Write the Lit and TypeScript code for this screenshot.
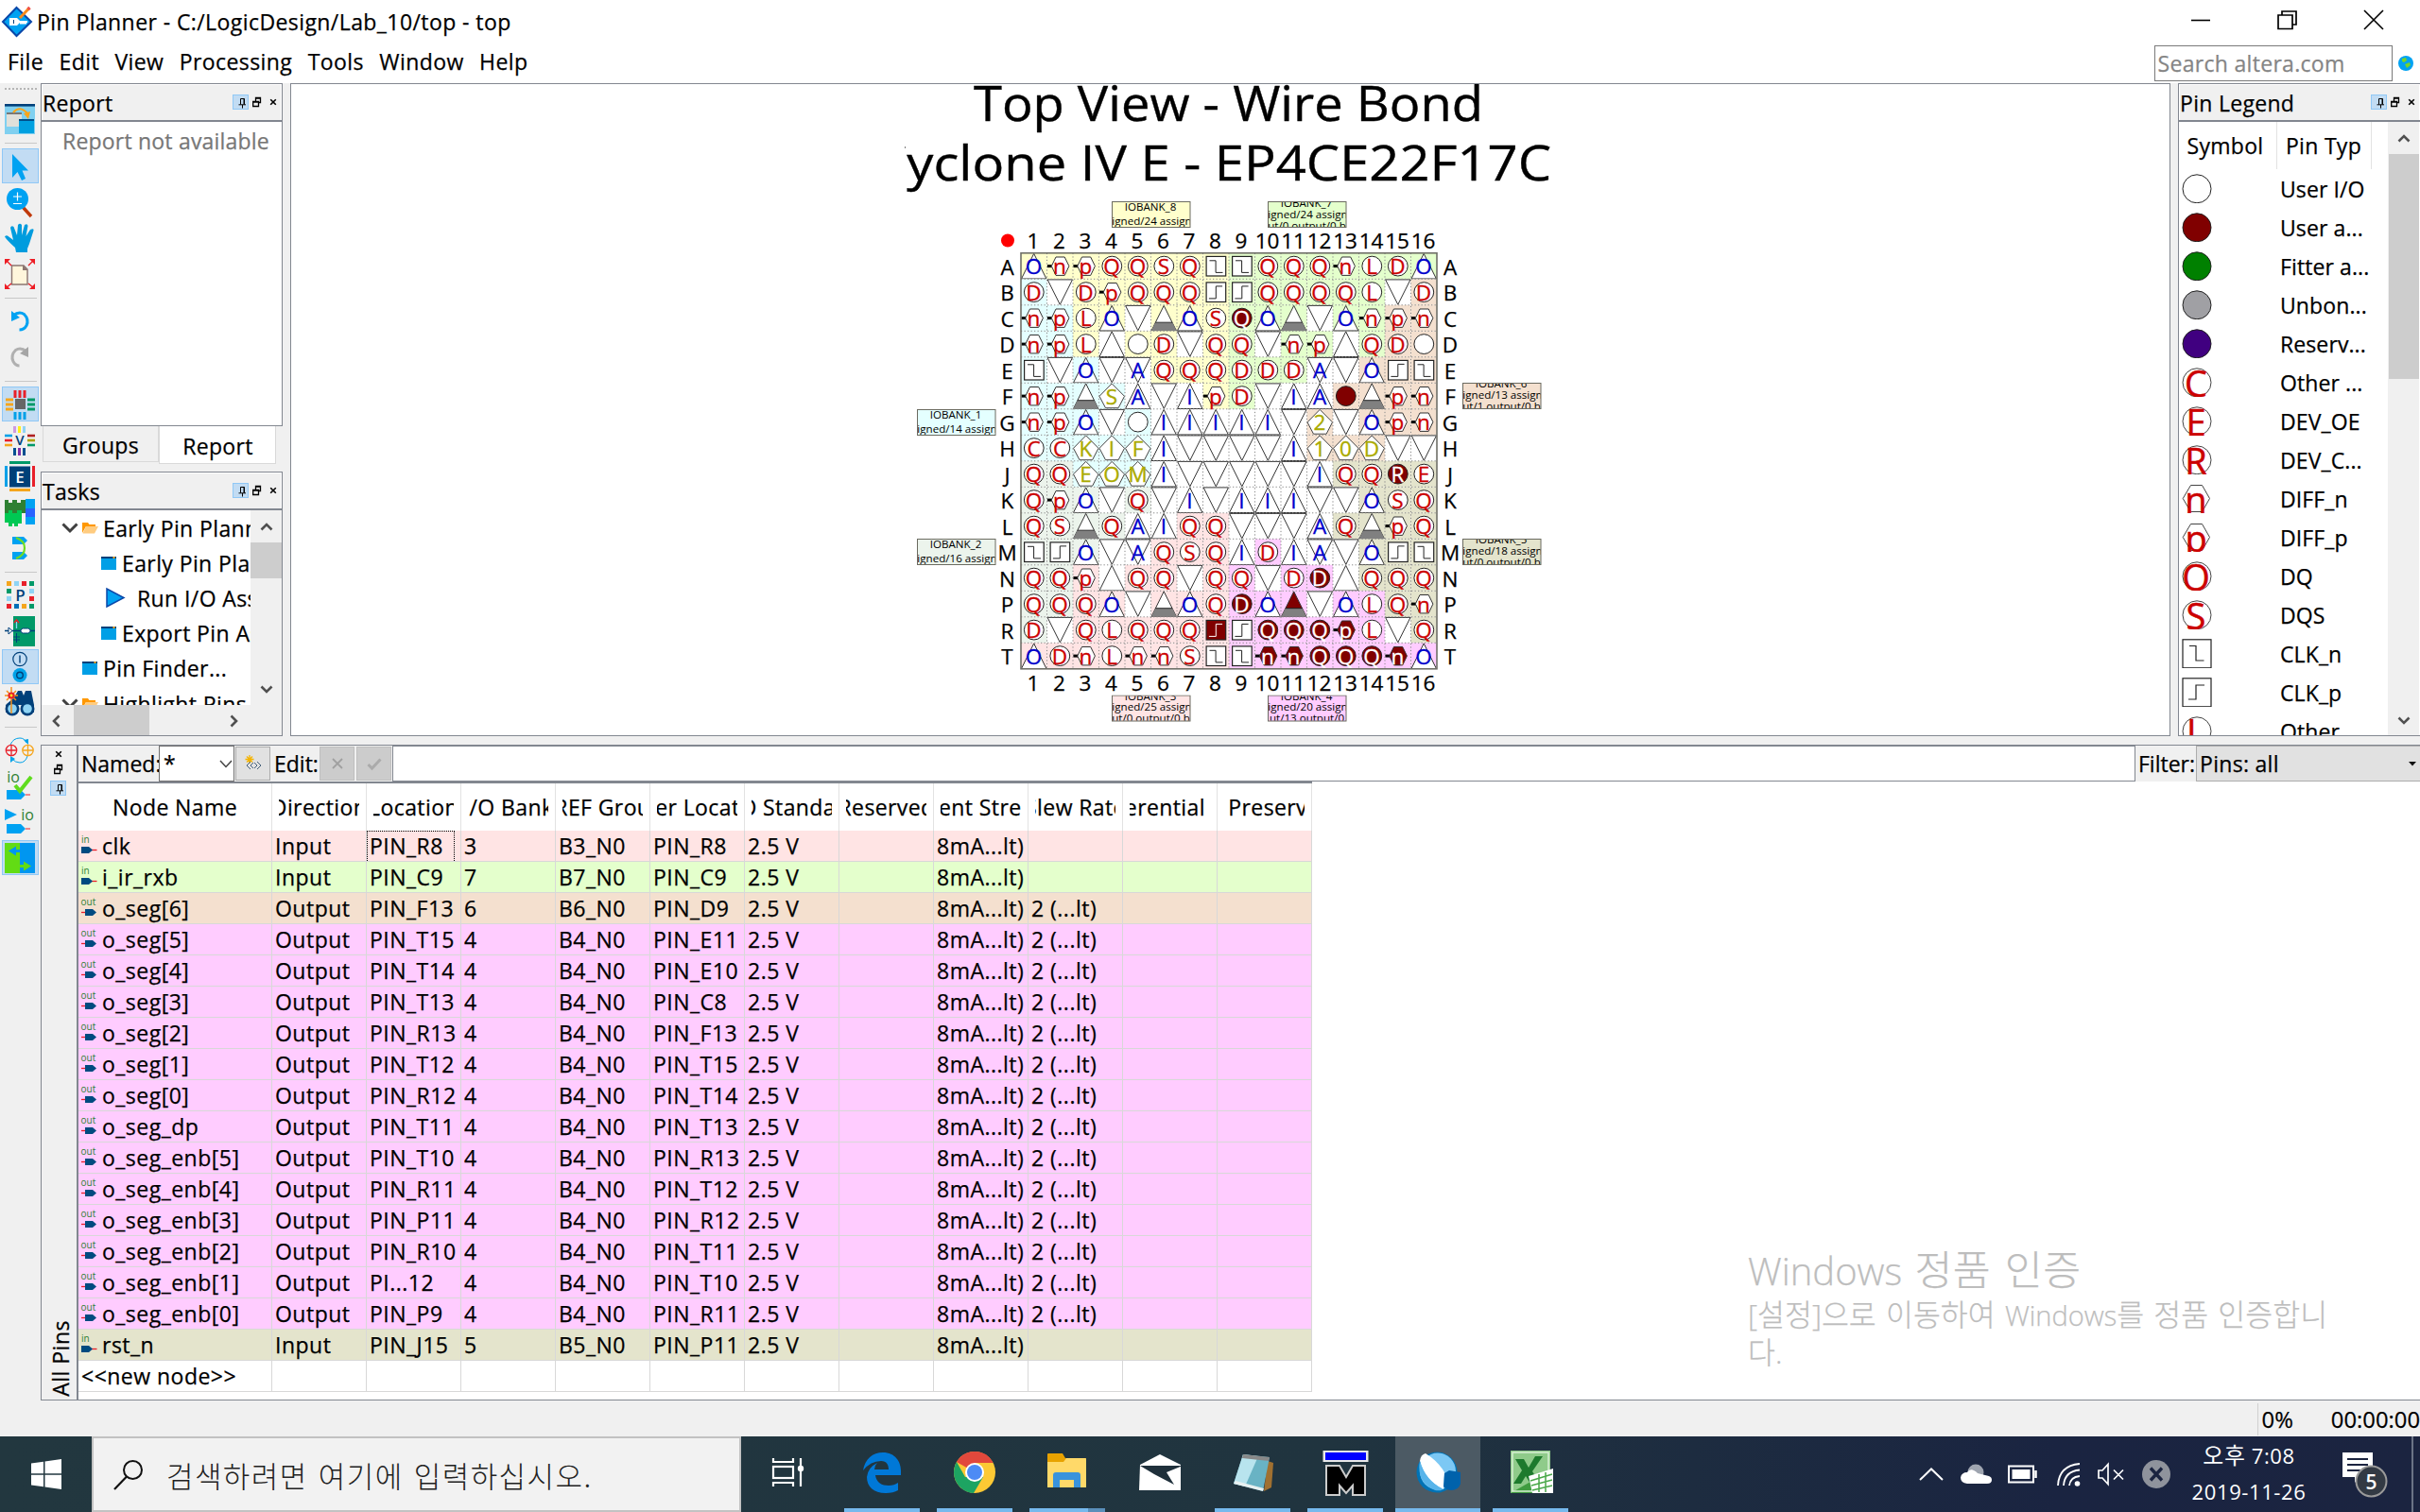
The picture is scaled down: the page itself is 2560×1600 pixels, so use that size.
import { LitElement, html, svg, css, nothing } from "lit";
import { customElement, property } from "lit/decorators.js";

/* ---------- palette ---------- */
const BANK: Record<string, string> = {
  "1": "#e4ffff", "2": "#ecf4ec", "3": "#ffe4e4", "4": "#ffccff",
  "5": "#e4e4cc", "6": "#f4e0cf", "7": "#e4ffcc", "8": "#ffffcc", w: "#ffffff",
};

/* ---------- package grid ----------
   Each token is <shape><letter?><!?><bank>.
   c circle, h hexagon, u up triangle, d down triangle, g power/ground,
   x clock-n, y clock-p, p pentagon; ! marks an assigned pin. */
const ROWS: [string, string][] = [
  ["A", "uO8 hn8 hp8 cQ8 cQ8 cS8 cQ8 x8 x7 cQ7 cQ7 cQ7 hn7 cL7 cD7 uO7"],
  ["B", "cD1 dw cD8 hp8 cQ8 cQ8 cQ8 y8 y7 cQ7 cQ7 cQ7 cQ7 cL7 dw cD6"],
  ["C", "hn1 hp1 cL8 uO8 dw g8 uO8 cS8 cQ!7 uO7 g7 dw uO7 hn7 hp6 hn6"],
  ["D", "hn1 hp1 cL8 uw c8 cD8 dw cQ8 cQ7 dw hn7 hp7 uw cQ7 cD6 c6"],
  ["E", "x1 dw uO1 dw dAw cQ8 cQ8 cQ8 cD7 cD7 cD7 dAw dw uO6 y6 x6"],
  ["F", "hn1 hp1 g1 pS1 uAw dw uIw hp8 cD7 dw uIw uAw c!6 g6 hp6 hn6"],
  ["G", "hn1 hp1 uO1 dw c1 uIw uIw uIw uIw uIw dw p26 dw uO6 hp6 hn6"],
  ["H", "cC1 cC1 pK1 pI1 pF1 uIw dw dw dw dw uIw p16 p06 pD6 dw dw"],
  ["J", "cQ2 cQ2 pE1 pO1 pM1 uIw dw dw dw dw dw uIw cQ5 cQ5 cR!5 cE5"],
  ["K", "cQ2 hp2 uO2 dw cQ2 dw uIw dw uIw uIw uIw dw dw uO5 cS5 cQ5"],
  ["L", "cQ2 cS2 g2 cQ2 uAw uIw cQ3 cQ3 dw dw dw uAw cQ5 g5 hp5 cQ5"],
  ["M", "x2 y2 uO2 dw dAw cQ3 cS3 cQ3 uIw cD4 uIw dAw dw uO5 y5 x5"],
  ["N", "cQ2 cQ2 hp3 uw cQ3 cQ3 dw cQ3 cQ4 dw cD4 cD!4 uw cQ5 cQ5 cQ5"],
  ["P", "cQ2 cQ2 cQ3 uO3 dw g3 uO3 cQ3 cD!4 uO4 g!4 dw uO4 cL4 cQ5 hn5"],
  ["R", "cD2 dw cQ3 cL3 cQ3 cQ3 cQ3 y!3 y4 cQ!4 cQ!4 cQ!4 hp!4 cL4 dw cQ5"],
  ["T", "uO3 cD3 hn3 cL3 hn3 hn3 cS3 x3 x4 hn!4 hn!4 cQ!4 cQ!4 cQ!4 hn!4 uO4"],
];

const X0 = 1080, Y0 = 267.8, P = 27.5;

const BANKS: [string, number, number, string, string, string, number][] = [
  ["8", 1176, 213, "IOBANK_8", "igned/24 assign", "", 8],
  ["7", 1341, 213, "IOBANK_7", "igned/24 assign", "ut/0 output/0 b", 4],
  ["6", 1547, 405, "IOBANK_6", "igned/13 assign", "ut/1 output/0 b", 3],
  ["1", 970, 433, "IOBANK_1", "igned/14 assign", "", 8],
  ["2", 970, 570, "IOBANK_2", "igned/16 assign", "", 8],
  ["5", 1547, 570, "IOBANK_5", "igned/18 assign", "ut/0 output/0 b", 3],
  ["3", 1176, 735.5, "IOBANK_3", "igned/25 assign", "ut/0 output/0 b", 3],
  ["4", 1341, 735.5, "IOBANK_4", "igned/20 assign", "ut/13 output/0", 3],
];

function pin(token: string, r: number, c: number) {
  const shape = token[0];
  const on = token.includes("!");
  const bank = token[token.length - 1];
  const body = token.slice(1, -1).replace("!", "");
  const fill = on ? "#800000" : "#fff";
  let mark: unknown = nothing;
  let color = on ? "#fff" : "#cc0000";
  const m = 13.8;
  switch (shape) {
    case "c": mark = svg`<circle cx=${m} cy=${m} r="10.4" fill=${fill} stroke="#222"/>`; break;
    case "h": mark = svg`<rect x="0.4" y="12.3" width="5" height="3" fill="#000"/><path d="M4.8 13.8L9.5 4.2H18.7L23.4 13.8L18.7 23.6H9.5Z" fill=${fill} stroke="#333"/>`; break;
    case "u": mark = svg`<path d="M13.7 .6L26.9 27.2H.5Z" fill=${fill} stroke="#333"/>`; color = "#0000cc"; break;
    case "d": mark = svg`<path d="M.6 .6H27L13.8 27Z" fill=${fill} stroke="#333"/>`; color = "#0000cc"; break;
    case "g": mark = svg`<path d="M13.7 .6L26.9 27.2H.5Z" fill=${fill} stroke="#333"/><path d="M4.6 18.6H22.8L26.9 27.2H.5Z" fill="#808080"/><path d="M4.8 18.4H22.6" stroke="#222"/>`; break;
    case "p": mark = svg`<path d="M13.7 .6L27 14L20.6 26.4H7L.5 14Z" fill=${fill} stroke="#444"/>`; color = "#aaaa00"; break;
    case "x": mark = svg`<rect x="3.6" y="3.6" width="20.6" height="20.6" fill=${fill} stroke="#222" stroke-width="1.2"/><path d="M7 8H13.6V20.6H21" fill="none" stroke=${on ? "#fff" : "#222"}/>`; break;
    case "y": mark = svg`<rect x="3.6" y="3.6" width="20.6" height="20.6" fill=${fill} stroke="#222" stroke-width="1.2"/><path d="M6.4 20.6H13.8V7.6H20.6" fill="none" stroke=${on ? "#fff" : "#222"}/>`; break;
  }
  return svg`<g transform="translate(${X0 + c * P} ${Y0 + r * P})">
    ${bank === "w" ? nothing : svg`<rect width=${P} height=${P} fill=${BANK[bank]}/>`}
    ${mark}
    ${body ? svg`<text x="13.5" y="22.4" text-anchor="middle" class="pl" fill=${color} stroke=${color}>${body}</text>` : nothing}
  </g>`;
}

@customElement("package-view")
class PackageView extends LitElement {
  static styles = css`
    :host { display: block; width: 100%; height: 100%; overflow: hidden; }
    svg { display: block; font-family: "Open Sans", "Noto Sans", sans-serif; letter-spacing: 0; }
    .pl { font-size: 22.5px; stroke-width: .35px; }
    .lab { font-size: 22.5px; stroke: #000; stroke-width: .25px; }
    .big { font-size: 52px; stroke: #000; stroke-width: .4px; }
    .tiny { font-size: 11.6px; }
  `;
  render() {
    const lines = Array.from({ length: 15 }, (_, i) => i + 1);
    return html`<svg width="1988" height="689" viewBox="308 89 1988 689">
      <defs><clipPath id="tc"><rect x="957" y="89" width="690" height="120"/></clipPath></defs>
      <g clip-path="url(#tc)">
        <text class="big" x="1030" y="128.400" textLength="539" lengthAdjust="spacingAndGlyphs">Top View - Wire Bond</text>
        <text class="big" x="924" y="190.800" textLength="717" lengthAdjust="spacingAndGlyphs">Cyclone IV E - EP4CE22F17C</text>
      </g>
      <circle cx="1066" cy="254.5" r="7" fill="#f00"/>
      <rect x=${X0} y=${Y0} width="440" height="440" fill="#fff"/>
      ${ROWS.map(([, t], r) => t.split(" ").map((k, c) => pin(k, r, c)))}
      ${lines.map((i) => svg`<path d="M${X0 + i * P} ${Y0}V${Y0 + 440}M${X0} ${Y0 + i * P}H${X0 + 440}" stroke="#8a8a8a" stroke-width="1" stroke-dasharray="1.3 2.2" fill="none"/>`)}
      <rect x=${X0} y=${Y0} width="440" height="440" fill="none" stroke="#707068" stroke-width="1.6"/>
      ${ROWS.map(([l], r) => svg`<text class="lab" text-anchor="middle" x="1065.5" y=${Y0 + r * P + 23}>${l}</text><text class="lab" text-anchor="middle" x="1534" y=${Y0 + r * P + 23}>${l}</text>`)}
      ${ROWS.map((_, c) => svg`<text class="lab" text-anchor="middle" x=${X0 + c * P + 13} y="262.8">${c + 1}</text><text class="lab" text-anchor="middle" x=${X0 + c * P + 13} y="730.8">${c + 1}</text>`)}
      ${BANKS.map(([b, x, y, l1, l2, l3, off]) => svg`<svg x=${x} y=${y} width="84" height="28.5" viewBox="0 0 84 28.5">
        <rect x=".5" y=".5" width="82.5" height="27" fill=${BANK[b]} stroke="#6b6b60"/>
        <svg x="1" y="1" width="81.5" height="26" viewBox="1 1 81.5 26">
          <text class="tiny" text-anchor="middle" x="41" y=${off + 2.3}>${l1}</text>
          <text class="tiny" text-anchor="middle" x="42.500" y=${l3 ? off + 13.6 : off + 16.8}>${l2}</text>
          <text class="tiny" text-anchor="middle" x="41.500" y=${off + 25.5}>${l3}</text>
        </svg></svg>`)}
    </svg>`;
  }
}

/* ---------- toolbar icons (32 x 32) ---------- */
const I: Record<string, unknown> = {
  windows: svg`<rect y="0" width="32" height="32" fill="#80d0f0"/><rect width="32" height="2.6" fill="#00407a"/><rect x="2" y="10" width="16" height="14" fill="#e0e0da"/><rect x="2" y="9" width="16" height="2" fill="#777"/><rect x="15" y="17" width="16" height="14" fill="#00a0e0"/><rect x="15" y="16" width="16" height="2" fill="#00508a"/><path d="M9 9Q16 1 24 10" fill="none" stroke="#f9a51a" stroke-width="2.2"/><path d="M20 10L27 8L25 16Z" fill="#f9a51a"/>`,
  cursor: svg`<path d="M8 3V28L13.5 22L18 31L22 29L18.5 20.5H25Z" fill="#00a2f2"/>`,
  zoom: svg`<path d="M19 21L28 31" stroke="#c0390b" stroke-width="3.4"/><circle cx="13.5" cy="12.5" r="11.5" fill="#00a2f2"/><path d="M9 10H18M13.500 5.500V14.500M9 17.500H18" stroke="#fff" stroke-width="1.2" fill="none"/>`,
  hand: svg`<path d="M12 31L11 26Q2 18 0 14.500Q2 12 5 15L9 18L6 5Q7 2 9.500 4L13 13L14 2Q16 -.5 18 2V13L21 2Q24 0 24.500 3L22.500 14L27 7Q31 5 30.500 8L26 22L24 27V31Z" fill="#009cde"/>`,
  fit: svg`<path d="M7.500 7H20L24 11V27H7.500Z" fill="#fff6dc" stroke="#8b7570" stroke-width="1.4"/><path d="M19 6.500L24.500 12H19Z" fill="#8b7570"/><path d="M1 1L7 7M31 1L25 7M1 31L7 26M31 31L25 26" stroke="#ed1c24" stroke-width="1.4"/><path d="M0 0H6L0 6ZM32 0H26L32 6ZM0 32H6L0 26ZM32 32H26L32 26Z" fill="#ed1c24"/>`,
  undo: svg`<path d="M9 10Q15 5 20.500 8.500Q26 14 23 20.500Q20.500 25 15.500 25" fill="none" stroke="#00a2f2" stroke-width="3"/><path d="M7 5V16L16 12Z" fill="#00a2f2"/>`,
  redo: svg`<path d="M23 10Q17 5 11.500 8.500Q6 14 9 20.500Q11.500 25 15.500 25" fill="none" stroke="#b0b0b0" stroke-width="3"/><path d="M25 5V16L16 12Z" fill="#a5a5a5"/>`,
  chip: svg`<rect x="11" y="10" width="11" height="11" fill="#666"/><path d="M11 1V9M16 1V9M21 1V9" stroke="#e8202a" stroke-width="3"/><path d="M11 24V32M16 24V32M21 24V32" stroke="#00a0e8" stroke-width="3"/><path d="M1 11H9M1 16H9M1 21H9" stroke="#f5a51d" stroke-width="3"/><path d="M24 11H32M24 16H32M24 21H32" stroke="#009968" stroke-width="3"/>`,
  vee: svg`<path d="M10.500 1V8" stroke="#cf9be0" stroke-width="3"/><path d="M15.500 1V8" stroke="#fff11a" stroke-width="3"/><path d="M20.500 1V8" stroke="#8fd4f5" stroke-width="3"/><path d="M10.500 24V32M20.500 24V32" stroke="#005090" stroke-width="3"/><path d="M15.500 24V32" stroke="#8030a8" stroke-width="3"/><path d="M0 11H8" stroke="#00a0e8" stroke-width="2.600"/><path d="M0 16H8" stroke="#e8202a" stroke-width="2.600"/><path d="M0 21H8" stroke="#f5a51d" stroke-width="2.600"/><path d="M24 11H32" stroke="#b02020" stroke-width="2.600"/><path d="M24 16H32" stroke="#b0a000" stroke-width="2.600"/><path d="M24 21H32" stroke="#009968" stroke-width="2.600"/><text x="16" y="21" class="g" font-size="15" fill="#00407a">V</text>`,
  ee: svg`<rect x="5" y="5.500" width="22" height="22" fill="#004078"/><path d="M5 1.500H27" stroke="#009968" stroke-width="3"/><path d="M5 30.500H27" stroke="#f5a51d" stroke-width="3"/><path d="M1.500 5V27" stroke="#00a0e8" stroke-width="3"/><path d="M30.500 5V27" stroke="#e8202a" stroke-width="3"/><text x="16" y="22.500" class="g" font-size="17" fill="#fff">E</text>`,
  puzzle: svg`<path d="M0 3H4V6H8V3H13V6H17V3H22V17H0Z" fill="#2e8033"/><path d="M0 17H4V14H8V17H13V14H18V21H18V28H14V31H10V28H8V31H4V27H0Z" fill="#00c853"/><rect x="22" y="2" width="10" height="10" fill="#00a2f2"/><rect x="22" y="12" width="10" height="9" fill="#2962ff"/><rect x="22" y="21" width="10" height="8" fill="#00a2f2"/>`,
  link: svg`<path d="M8 4H20L24 8L20 12H8ZM8 20H20L24 24L20 28H8Z" fill="#00a2f2"/><path d="M12 5Q21 8 21 16Q21 24 12 27" stroke="#70dc20" stroke-width="2.200" fill="none"/>`,
  pee: svg`<g fill="#f5a51d"><rect x="2" y="1" width="5" height="5"/><rect x="18" y="25" width="5" height="5"/></g><g fill="#e8202a"><rect x="18" y="1" width="5" height="5"/><rect x="26" y="17" width="5" height="5"/><rect x="2" y="25" width="5" height="5"/></g><g fill="#8fd4f5"><rect x="10" y="1" width="5" height="5"/><rect x="26" y="9" width="5" height="5"/><rect x="2" y="17" width="5" height="5"/></g><g fill="#009968"><rect x="26" y="1" width="5" height="5"/><rect x="2" y="9" width="5" height="5"/><rect x="26" y="25" width="5" height="5"/></g><rect x="10" y="25" width="5" height="5" fill="#0070b8"/><text x="16.500" y="21.500" class="g" font-size="17" fill="#00407a">P</text>`,
  board: svg`<rect x="9" y="0" width="23" height="32" fill="#009968"/><path d="M0 15.500H4M8 15.500H17M26 15.500H32" stroke="#00407a" stroke-width="1.300"/><path d="M4 12V19L8 15.500Z" fill="#fff" stroke="#00407a"/><rect x="17" y="13" width="10" height="5" rx="2.500" fill="#fff" stroke="#00407a"/><path d="M12.500 6V13" stroke="#8fd4f5" stroke-width="1.300"/><path d="M10 7L12.500 4L15 7" stroke="#e8202a" fill="none" stroke-width="1.500"/><path d="M12.500 18V28M9 22H16M9 25H16" stroke="#00407a"/>`,
  ioo: svg`<circle cx="16" cy="7.500" r="7.200" fill="none" stroke="#00407a" stroke-width="1.200"/><path d="M16 3.500V11.500" stroke="#00407a" stroke-width="1.400"/><circle cx="16" cy="24.500" r="7.500" fill="#00a2e8"/><circle cx="16" cy="24.500" r="3.300" fill="none" stroke="#00407a" stroke-width="1.400"/>`,
  bino: svg`<path d="M10 10L14 3H18L20 8L22 3H28L31 18V26H18V18H14V26H1V18Z" fill="#00407a"/><circle cx="8" cy="22" r="7.500" fill="#00407a"/><circle cx="24" cy="22" r="7.500" fill="#00407a"/><circle cx="8" cy="22" r="4.800" fill="#8fd4f5"/><circle cx="24" cy="22" r="4.800" fill="#8fd4f5"/><path d="M7 -1V27M0 8H14M2 3L12 13M2 13L12 3" stroke="#f5901d" stroke-width="1.500"/><circle cx="7" cy="8" r="3.600" fill="#e8202a"/><circle cx="7" cy="8" r="1.400" fill="#fff11a"/>`,
  swap: svg`<path d="M6 10Q9 3 16 3Q21 3 23 8" fill="none" stroke="#00a2e8"/><path d="M24 22Q22 29 16 29Q11 29 8 25" fill="none" stroke="#00a2e8"/><path d="M20 5L25 4V10ZM6 22V29L11 25Z" fill="#00a2e8"/><circle cx="7" cy="16" r="5.700" fill="none" stroke="#e8202a" stroke-width="1.300"/><path d="M7 10V22M1 16H13" stroke="#e8202a" stroke-width="1.300"/><circle cx="24.500" cy="16" r="5.700" fill="none" stroke="#f5a51d" stroke-width="1.300"/><path d="M24.500 10V22M19 16H30" stroke="#f5a51d" stroke-width="1.300"/>`,
  iocheck: svg`<text x="9" y="12" class="r" font-size="16" fill="#2e8033">io</text><path d="M2 20H17L22 25L17 30H2Z" fill="#00a2f2"/><path d="M22 25H27" stroke="#e8202a"/><path d="M11 15L16 21L28 6" fill="none" stroke="#5fdc1e" stroke-width="4"/>`,
  ioplay: svg`<path d="M0 2V14L13 8Z" fill="#00a2f2"/><text x="24" y="14" class="r" font-size="16" fill="#2e8033">io</text><path d="M2 18H17L22 23L17 28H2Z" fill="#00a2f2"/><path d="M22 23H27" stroke="#e8202a"/>`,
  exchange: svg`<rect width="16" height="32" fill="#62dc14"/><rect x="16" width="16" height="32" fill="#0096f0"/><path d="M4 8.500L12 3.500V7H20V10H12V13.500Z" fill="#0096f0"/><path d="M28 24.500L20 19.500V23H12V26H20V29.500Z" fill="#62dc14"/>`,
};
const TOOLS = ["windows", "-", "cursor*", "zoom", "hand", "fit", "-", "undo", "redo", "-", "chip*", "vee", "ee", "puzzle", "link", "-", "pee", "board", "ioo*", "bino", "-", "swap", "iocheck", "ioplay", "exchange*"];

/* ---------- dock caption ---------- */
const pinBtn = html`<span class="pb on"><svg width="16" height="15" viewBox="0 0 16 15"><path d="M7.500 3.500H11.500V9.500M7.500 3.500V9.500M5.500 9.800H13M9.500 10V13.500" fill="none" stroke="#000"/><path d="M11 3.500V9.500" stroke="#000"/></svg></span>`;
const floatBtn = html`<span class="pb"><svg width="10" height="12" viewBox="0 0 10 12"><path d="M3.500 5V1.500H8.500V6.500H6.500M3 2H9" fill="none" stroke="#000" stroke-width="1.300"/><path d="M.700 5.500H6.500V10.500H.700ZM.700 6.200H6.500" fill="none" stroke="#000" stroke-width="1.300"/></svg></span>`;
const closeBtn = html`<span class="pb"><svg width="8" height="8" viewBox="0 0 8 8"><path d="M1.200 1.200L6.800 6.800M6.800 1.200L1.200 6.800" stroke="#000" stroke-width="1.600"/></svg></span>`;

/* ---------- table ---------- */
const HEAD = ["Node Name", "Direction", "Location", "I/O Bank", "VREF Group", "Fitter Location", "I/O Standard", "Reserved", "Current Strength", "Slew Rate", "Differential Pair", "Strict Preservation"];
const NODES: [string, string, string, string, string, string][] = [
  ["clk", "Input", "PIN_R8", "3", "B3_N0", "PIN_R8"],
  ["i_ir_rxb", "Input", "PIN_C9", "7", "B7_N0", "PIN_C9"],
  ["o_seg[6]", "Output", "PIN_F13", "6", "B6_N0", "PIN_D9"],
  ["o_seg[5]", "Output", "PIN_T15", "4", "B4_N0", "PIN_E11"],
  ["o_seg[4]", "Output", "PIN_T14", "4", "B4_N0", "PIN_E10"],
  ["o_seg[3]", "Output", "PIN_T13", "4", "B4_N0", "PIN_C8"],
  ["o_seg[2]", "Output", "PIN_R13", "4", "B4_N0", "PIN_F13"],
  ["o_seg[1]", "Output", "PIN_T12", "4", "B4_N0", "PIN_T15"],
  ["o_seg[0]", "Output", "PIN_R12", "4", "B4_N0", "PIN_T14"],
  ["o_seg_dp", "Output", "PIN_T11", "4", "B4_N0", "PIN_T13"],
  ["o_seg_enb[5]", "Output", "PIN_T10", "4", "B4_N0", "PIN_R13"],
  ["o_seg_enb[4]", "Output", "PIN_R11", "4", "B4_N0", "PIN_T12"],
  ["o_seg_enb[3]", "Output", "PIN_P11", "4", "B4_N0", "PIN_R12"],
  ["o_seg_enb[2]", "Output", "PIN_R10", "4", "B4_N0", "PIN_T11"],
  ["o_seg_enb[1]", "Output", "PI...12", "4", "B4_N0", "PIN_T10"],
  ["o_seg_enb[0]", "Output", "PIN_P9", "4", "B4_N0", "PIN_R11"],
  ["rst_n", "Input", "PIN_J15", "5", "B5_N0", "PIN_P11"],
];
const dirIcon = (out: boolean) => out
  ? html`<svg class="dir" width="17" height="20" viewBox="0 0 17 20"><text x="-.500" y="7.500" font-size="10" fill="#2e8033">out</text><path d="M0 15.500H5" stroke="#e8202a" stroke-width="1.300"/><path d="M4 12H12L16 15.500L12 19H4Z" fill="#004a80"/></svg>`
  : html`<svg class="dir" width="17" height="20" viewBox="0 0 17 20"><text x="0" y="7.500" font-size="10" fill="#2e8033">in</text><path d="M11 15.500H16.500" stroke="#e8202a" stroke-width="1.300"/><path d="M0 12H8L12 15.500L8 19H0Z" fill="#004a80"/></svg>`;

/* ---------- legend ---------- */
const LEGEND: [string, string, string][] = [
  ["c", "#fff", "User I/O"], ["c", "#800000", "User a..."], ["c", "#008000", "Fitter a..."], ["c", "#a0a0a4", "Unbon..."], ["c", "#400080", "Reserv..."],
  ["C", "", "Other ..."], ["E", "", "DEV_OE"], ["R", "", "DEV_C..."], ["n", "h", "DIFF_n"], ["p", "h", "DIFF_p"], ["Q", "", "DQ"], ["S", "", "DQS"],
  ["x", "", "CLK_n"], ["y", "", "CLK_p"], ["L", "", "Other"],
];
function legendSymbol([k, v]: [string, string, string]) {
  let g;
  if (k === "c") g = svg`<circle cx="16" cy="15.800" r="15" fill=${v} stroke="#222"/>`;
  else if (k === "x" || k === "y") g = svg`<rect x="1" y=".8" width="30" height="30" fill="#fff" stroke="#222" stroke-width="1.200"/><path d=${k === "x" ? "M8 7.500H15V23H23.500" : "M7 23H15V8H24"} fill="none" stroke="#222" stroke-width="1.200"/>`;
  else if (v === "h") g = svg`<path d="M1.200 15.500L9.500 1.500H21.500L29.500 15.500L21.500 29.500H9.500Z" fill="#fff" stroke="#444"/><text x="15" y="30.600" class="sym">${k}</text>`;
  else g = svg`<circle cx="16" cy="15.800" r="15" fill="#fff" stroke="#444"/><text x="15" y="30.600" class="sym">${k}</text>`;
  return html`<svg class="lsym" width="32" height="31.5" viewBox="0 0 32 31.5">${g}</svg>`;
}

/* ---------- tasks ---------- */
const chev = html`<svg width="18" height="12" viewBox="0 0 18 12"><path d="M1.500 1.500L9 9L16.500 1.500" fill="none" stroke="#404040" stroke-width="3"/></svg>`;
const folder = html`<svg width="17" height="13" viewBox="0 0 17 13"><path d="M0 1H6L7.500 3H14V5H4L0 12Z" fill="#ff9800"/><path d="M4 5H17L13 12.500H.500Z" fill="#ffcc80"/></svg>`;
const sheet = html`<svg width="16" height="14" viewBox="0 0 16 14"><rect width="16" height="14" fill="#009fe6"/><rect width="16" height="2" fill="#00407a"/><rect x="12.500" width="2" height="2" fill="#f9a51a"/></svg>`;
const play = html`<svg width="20" height="21" viewBox="0 0 20 21"><path d="M1 1V20L19 10.500Z" fill="#00a2f2" stroke="#0a47a9" stroke-width="1.500"/></svg>`;
const TASKS: [number, unknown, number, string, number][] = [
  [1, folder, 5, "Early Pin Plannning", 87],
  [0, sheet, 6, "Early Pin Planning", 107],
  [0, play, 13, "Run I/O Assignment", 112],
  [0, sheet, 6, "Export Pin Assignments", 107],
  [0, sheet, 6, "Pin Finder...", 87],
  [1, folder, 5, "Highlight Pins", 87],
];
const arrow = (d: string) => html`<svg width="14" height="14" viewBox="0 0 14 14"><path d=${d} fill="none" stroke="#505050" stroke-width="2.600"/></svg>`;
const UP = "M1.500 9.500L7 4L12.500 9.500", DOWN = "M1.500 4.500L7 10L12.500 4.500", LEFT = "M9.500 1.500L4 7L9.500 12.500", RIGHT = "M4.500 1.500L10 7L4.500 12.500";

/* ---------- task bar ---------- */
const APPS: [string, unknown][] = [
  ["", svg`<g fill="none" stroke="#fff" stroke-width="2.200"><path d="M5 7V11H26V7M5 37V33H26V37"/><rect x="5" y="16" width="21" height="12"/><path d="M34 7V37"/></g><circle cx="34" cy="18" r="3.200" fill="#fff"/>`],
  ["run", svg`<path d="M2 20C4 8 12 1 23 1C36 1 42 11 42 20V25H15C16 33 22 36 29 36Q35 36 39 33V41Q34 44 26 44C13 44 6 37 6 27Q7 17 17 12Q14 15 14 19H29C29 14 27 10 21 10Q10 10 2 20Z" fill="#0078d7"/>`],
  ["run", svg`<circle cx="22" cy="22" r="22" fill="#fcc934"/><path d="M22 22L2.900 11A22 22 0 0 1 41.100 11L41 12H22Z" fill="#e2483c"/><path d="M3 11A22 22 0 0 0 21 44L31 27L12 27Z" fill="#1da462"/><path d="M22 0A22 22 0 0 1 41.500 12H22Z" fill="#e2483c"/><circle cx="22" cy="22" r="10" fill="#fff"/><circle cx="22" cy="22" r="8" fill="#4c8bf5"/>`],
  ["multi", svg`<path d="M1 6V3Q1 2 2 2H17L20 7H41Q42 7 42 8V16H1Z" fill="#e8a200"/><path d="M1 11H18L21 7H41Q42 7 42 8V38H1Z" fill="#ffd969"/><path d="M7 38V25Q7 22 10 22H33Q36 22 36 25V38H29V30H14V38Z" fill="#3a93dc"/>`],
  ["", svg`<path d="M1 14L22 3L44 14V41H0Z" fill="#fff"/><path d="M1 15H46L29 22L37 35L16 24Z" fill="#1f303b"/>`],
  ["run", svg`<path d="M38 10L44 12L42 38L34 42Z" fill="#a07030"/><path d="M12 3L40 6L33 42L2 34Z" fill="#69b3c4"/><path d="M12 3L28 5L14 37L2 34Z" fill="#b8e4ee"/><path d="M12 3L40 6L39 10L11 7Z" fill="#888"/><path d="M2 34L33 42L34 39L4 31Z" fill="#e8f0f0"/>`],
  ["run", svg`<rect x="-1.500" y="-1" width="48" height="12" fill="#e8e8e8"/><rect x="1" y="1" width="43" height="8" fill="#0000ff"/><path d="M2 15H16L23 27L30 15H43V46H30V36L23 44L16 36V46H2Z" fill="#000" stroke="#ccc" stroke-width="2"/>`],
  ["active", svg`<circle cx="21" cy="22" r="21.500" fill="#0072b5"/><ellipse cx="22" cy="21" rx="19" ry="19.500" fill="#7cc8f4"/><path d="M3 10Q4 3 9 2Q22 10 29 22L28 40Q9 31 3 10Z" fill="#fff"/><path d="M3 10Q-1 32 19 41Q24 42 28 40Q9 31 3 10Z" fill="#58b4ea"/><path d="M29 23L34 20L46 22V34Q44 41 36 41Q30 40 28 37Z" fill="#0062ab"/>`],
  ["run", svg`<rect x="1" y="-1" width="42" height="45" fill="#3f9c3f"/><path d="M1 -1H43V20L1 44Z" fill="#8fcb8a"/><rect x="3" y="1" width="38" height="41" fill="none" stroke="#d7efd4" stroke-width="1.500"/><path d="M6 8H15L20 17L27 5H35L24 21L32 34H22L17 26L12 34H4L13 20Z" fill="#1d7a2d"/><path d="M20 26L46 18V44H24Z" fill="#fff"/><path d="M22 31L45 24M23 36L45 30M24 41L45 36M31 24V43M38 22V43" stroke="#4aa84a" stroke-width="1.500"/>`],
];

@customElement("app-root")
export class AppRoot extends LitElement {
  static styles = css`
    :host { display: block; width: 2560px; height: 1600px; overflow: hidden; background: #f0f0f0; color: #000; font-family: "Open Sans", "Noto Sans", "Noto Sans CJK KR", sans-serif; font-size: 23px; letter-spacing: .3px; white-space: nowrap; -webkit-text-stroke: .25px currentColor; }
    * { box-sizing: border-box; }
    svg { display: block; flex: none; overflow: visible; -webkit-text-stroke: 0; }
    .g { font-weight: 600; text-anchor: middle; letter-spacing: 0; }
    .r { text-anchor: middle; letter-spacing: 0; }
    .title { height: 46px; background: #fff; display: flex; align-items: center; padding: 0 0 0 2px; letter-spacing: .42px; }
    .title svg.logo { margin-right: 5px; margin-top: -1px; }
    .caps { margin-left: auto; display: flex; gap: 71px; padding-right: 39px; margin-top: -4px; }
    .menu { height: 42px; background: #fff; display: flex; align-items: center; padding-left: 8px; gap: 16.400px; letter-spacing: .42px; }
    .menu > span { margin-top: -4px; }
    .search { margin-left: auto; width: 252px; height: 38px; border: 1px solid #7a7a7a; color: #858585; display: flex; align-items: center; padding-left: 3px; letter-spacing: .3px; }
    .globe { margin: 0 7px 0 -10px; }
    .bars { display: flex; height: 1394px; }
    .tools { width: 43px; height: 1394px; flex: none; background: #f0f0f0; padding-top: 5px; display: flex; flex-direction: column; align-items: center; }
    .grip { width: 34px; height: 2px; background: repeating-linear-gradient(90deg, #b5b5b5 0 2px, transparent 2px 4px); margin-bottom: 12px; }
    .tool { width: 39px; height: 38px; margin-right: 1px; display: grid; place-items: center; flex: none; border: 1px solid transparent; }
    .tool.on { background: #c2dcf3; border-color: #90c8f6; height: 37px; margin-bottom: 1px; }
    .sep { width: 34px; height: 12px; flex: none; display: flex; align-items: center; }
    .sep::before { content: ""; height: 1px; width: 100%; background: #c8c8c8; }
    .main { flex: 1; min-width: 0; display: flex; flex-direction: column; }
    .upper { display: flex; height: 691px; }
    .left { width: 256px; display: flex; flex-direction: column; }
    .dock { border: 1px solid #828790; background: #f0f0f0; display: flex; flex-direction: column; overflow: hidden; }
    .cap { height: 38px; flex: none; display: flex; align-items: center; padding: 1px 3px 0 0; border: 1px solid #fff; border-bottom: 0; }
    .cap .btns { margin-left: auto; display: flex; align-items: center; gap: 4px; margin-top: -3px; }
    .pb { display: grid; place-items: center; min-width: 10px; }
    .btns .pb + .pb { margin-left: 0; }
    .btns .pb + .pb + .pb { margin-left: 3px; }
    .pb.on { background: #c2dcf3; border: 1px solid #90c8f6; width: 17px; height: 16px; }
    .body { border-top: 2px solid #828790; background: #fff; flex: 1; min-height: 0; overflow: hidden; }
    .report { height: 363px; flex: none; }
    .na { color: #777; padding: 4px 0 0 22px; letter-spacing: .2px; }
    .tabs { height: 48px; display: flex; padding-left: 2px; }
    .tab { width: 123px; height: 38px; border: 1px solid #d9d9d9; border-top: 0; display: grid; place-items: center; padding-top: 2px; }
    .tab.on { width: 124px; height: 40px; background: #fff; padding-left: 1px; }
    .tasks { height: 280px; flex: none; }
    .tgrid { display: grid; grid-template-columns: 221px 33px; grid-template-rows: 206px 33px; height: 100%; background: #f0f0f0; }
    .tree { background: #fff; overflow: hidden; }
    .trow { height: 37.200px; display: flex; align-items: center; letter-spacing: .4px; }
    .trow .tx { width: 0; flex: 1; }
    .sb { display: flex; flex-direction: column; align-items: center; background: #f0f0f0; }
    .thumb { background: #cdcdcd; }
    .canvas { flex: none; width: 1989px; margin: 0 8px; border: 1px solid #828790; background: #fff; overflow: hidden; }
    .legend { width: 257px; flex: none; }
    .lg { display: flex; height: 100%; }
    .ltab { width: 221px; overflow: hidden; }
    .lhead { display: flex; height: 50px; }
    .lhead span { border-right: 1px solid #e2e2e2; display: grid; place-items: center; }
    .lrow { height: 41px; display: flex; align-items: center; padding-left: 3px; letter-spacing: .1px; }
    .lrow span { margin-left: 72px; padding-top: 1px; }
    .lsym { overflow: hidden; }
    .sym { font-size: 38px; fill: #c00; stroke: #c00; stroke-width: .5px; text-anchor: middle; letter-spacing: 0; }
    .lower { margin-top: 9px; height: 694px; display: flex; border: 1px solid #828790; border-right: 0; }
    .side { width: 39px; flex: none; display: flex; flex-direction: column; align-items: center; border-right: 2px solid #828790; padding: 5px 2px 0 0; gap: 6px; }
    .vert { writing-mode: vertical-rl; transform: rotate(180deg); line-height: 34px; padding-top: 1px; margin: auto -4px 2px 0; letter-spacing: .5px; }
    .pane { flex: 1; min-width: 0; background: #fff; display: flex; flex-direction: column; }
    .bar { height: 38px; flex: none; background: #f0f0f0; display: flex; align-items: center; border-bottom: 0; }
    .bar .lbl { padding-left: 3px; letter-spacing: 0; }
    .combo { height: 38px; border: 1px solid #707070; background: #fff; display: flex; align-items: center; justify-content: space-between; padding: 0 1px 0 4px; }
    .bt { width: 37px; height: 36px; border: 1px solid #adadad; background: #e1e1e1; display: grid; place-items: center; }
    .bt.off { background: #ccc; border-color: #bfbfbf; }
    .edit { flex: 1; height: 38px; border: 1px solid #828790; background: #fff; margin-left: 1px; }
    .filter { width: 237px; height: 38px; background: #e1e1e1; border: 1px solid #adadad; border-right: 0; display: flex; align-items: center; padding: 0 4px 0 3px; justify-content: space-between; }
    .grid { border-top: 2px solid #828790; display: grid; grid-template-columns: 205px repeat(11, 100px); width: 1305px; }
    .th { height: 50px; border-right: 1px solid #e2e2e2; padding: 0 7px; display: flex; }
    .th div { flex: 1; overflow: hidden; display: flex; justify-content: center; align-items: center; letter-spacing: .4px; }
    .td { height: 33px; border-right: 1px solid #d8d8d8; border-bottom: 1px solid #d8d8d8; padding: 0 0 0 3px; display: flex; align-items: center; overflow: hidden; letter-spacing: .48px; }
    .td.focus { position: relative; }
    .td.focus::after { content: ""; position: absolute; left: 0; top: 0; width: 91px; height: 32px; border: 1px dotted #000; }
    .dir { margin-right: 5px; margin-top: -3px; letter-spacing: 0; }
    .status { height: 38px; display: flex; align-items: center; justify-content: flex-end; padding: 2px 0 0; letter-spacing: 0; font-size: 23.800px; }
    .status span { border-left: 1px solid #d0d0d0; height: 34px; display: flex; align-items: center; padding-left: 4px; }
    .status span + span { border: 0; padding-left: 40px; }
    .task { height: 80px; display: flex; background: linear-gradient(90deg, #22373f, #20343f 55%, #1a2441 85%, #1b2440); color: #fff; letter-spacing: 0; -webkit-text-stroke: 0; }
    .start { width: 97px; display: grid; place-items: center; }
    .find { width: 687px; background: #f2f2f2; border: 2px solid #c2c2c2; color: #222; display: flex; align-items: center; padding-left: 21px; gap: 25px; font-family: "Noto Sans CJK KR", sans-serif; font-size: 31px; font-weight: 300; letter-spacing: 1.400px; word-spacing: 3px; }
    .find svg { margin-top: 2px; }
    .apps { display: flex; margin-left: 6px; }
    .app { width: 90px; margin-right: 8px; display: flex; flex-direction: column; }
    .app .ic { height: 76px; display: grid; place-items: center; }
    .app i { height: 4px; margin: 0 5px; }
    .app.run i { background: #76b9ed; }
    .app.multi i { background: linear-gradient(90deg, #76b9ed 62px, #5a8fba 62px); }
    .app.active { background: #4c5a64; margin-left: 0; }
    .app.active i { background: #76b9ed; margin: 0; }
    .tray { margin-left: auto; display: flex; align-items: center; }
    .clock { width: 134px; font-size: 22px; line-height: 38px; text-align: center; margin: -2px 32px 0 15px; letter-spacing: .6px; }
    .peek { width: 9px; height: 80px; border-left: 2px solid #6b7486; }
    .mark { position: absolute; left: 1849px; top: 1312px; width: 640px; color: #bdbdbd; font-weight: 300; letter-spacing: 0; }
    .mark .a { font-size: 40px; line-height: 66px; height: 66px; word-spacing: 3px; }
    .mark .b { font-size: 29px; line-height: 40px; margin-top: -6px; word-spacing: 2px; }
    .ko { font-size: 1.085em; line-height: 1; }
    .mark .a .ko { letter-spacing: .4px; }
  `;

  @property({ type: String }) named = "*";

  private caption(t: string) {
    return html`<div class="cap">${t}<div class="btns">${pinBtn}${floatBtn}${closeBtn}</div></div>`;
  }

  private cells(n: string[] | null) {
    if (!n) return html`<div class="td">&lt;&lt;new node&gt;&gt;</div>${Array.from({ length: 11 }, () => html`<div class="td"></div>`)}`;
    const out = n[1] === "Output";
    const vals = [n[1], n[2], n[3], n[4], n[5], "2.5 V", "", "8mA...lt)", out ? "2 (...lt)" : "", "", ""];
    const bg = `background:${BANK[n[3]]}`;
    return html`<div class="td" style=${bg}>${dirIcon(out)}${n[0]}</div>
      ${vals.map((v, i) => html`<div class="td ${n[0] === "clk" && i === 1 ? "focus" : ""}" style=${bg}>${v}</div>`)}`;
  }

  render() {
    return html`
      <div class="title">
        <svg class="logo" width="32" height="32" viewBox="0 0 32 32"><path d="M15.500 1L31 16L15.500 31L1 16Z" fill="#00a2f2" stroke="#0a47a9" stroke-width="2"/><path d="M8 12H16L20 16L16 20H8Z" fill="#fff"/><path d="M19 16H27M19 17.500H26" stroke="#fff" stroke-width="1.800"/><path d="M12.500 14V18" stroke="#00407a"/><path d="M19 12L29 1.500" stroke="#f98a1a" stroke-width="3"/><path d="M27.500 3L29.500 1" stroke="#f0504a" stroke-width="3.400"/></svg>
        <span>Pin Planner - C:/LogicDesign/Lab_10/top - top</span>
        <div class="caps">
          <svg width="20" height="20" viewBox="0 0 20 20"><path d="M0 10.500H20" stroke="#000" stroke-width="1.600"/></svg>
          <svg width="21" height="20" viewBox="0 0 21 20"><path d="M1 5H16V19.500H1ZM5 5V1H20V15H16" fill="none" stroke="#000" stroke-width="1.700"/></svg>
          <svg width="20" height="20" viewBox="0 0 20 20"><path d="M0 0L20 20M20 0L0 20" stroke="#000" stroke-width="1.600"/></svg>
        </div>
      </div>
      <div class="menu">
        ${["File", "Edit", "View", "Processing", "Tools", "Window", "Help"].map((m) => html`<span>${m}</span>`)}
        <div class="search">Search altera.com</div>
        <svg class="globe" width="16" height="16" viewBox="0 0 16 16"><circle cx="8" cy="8" r="8" fill="#00a2f2"/><path d="M4 3L8 2L9 5L6 7L4 6ZM7 9L12 7L13 10L9 13Z" fill="#76d32a"/></svg>
      </div>
      <div class="bars">
        <div class="tools">
          <div class="grip"></div>
          ${TOOLS.map((t) => t === "-" ? html`<div class="sep"></div>` : html`<div class="tool ${t.endsWith("*") ? "on" : ""}"><svg width="32" height="32" viewBox="0 0 32 32">${I[t.replace("*", "")]}</svg></div>`)}
        </div>
        <div class="main">
          <div class="upper">
            <div class="left">
              <div class="dock report">${this.caption("Report")}<div class="body"><div class="na">Report not available</div></div></div>
              <div class="tabs"><div class="tab">Groups</div><div class="tab on">Report</div></div>
              <div class="dock tasks">${this.caption("Tasks")}
                <div class="body"><div class="tgrid">
                  <div class="tree">${TASKS.map(([c, ic, gap, t, x]) => html`<div class="trow" style="padding-left:${x - 44 - (c ? 22 : 0)}px">${c ? chev : nothing}<span style="margin-left:${c ? 4 : 0}px">${ic}</span><span class="tx" style="margin-left:${gap}px">${t}</span></div>`)}</div>
                  <div class="sb" style="padding-top:11px">${arrow(UP)}<div class="thumb" style="width:33px;height:38px;margin-top:9px"></div><div style="margin-top:110px">${arrow(DOWN)}</div></div>
                  <div class="sb" style="flex-direction:row;padding-left:9px">${arrow(LEFT)}<div class="thumb" style="width:80px;height:33px;margin-left:11px"></div><div style="margin-left:82px">${arrow(RIGHT)}</div></div>
                </div></div>
              </div>
            </div>
            <div class="canvas"><package-view></package-view></div>
            <div class="dock legend">${this.caption("Pin Legend")}
              <div class="body"><div class="lg">
                <div class="ltab">
                  <div class="lhead"><span style="width:104px;padding-right:5px">Symbol</span><span style="width:100px;padding-right:1px">Pin Typ</span></div>
                  ${LEGEND.map((l) => html`<div class="lrow">${legendSymbol(l)}<span>${l[2]}</span></div>`)}
                </div>
                <div class="sb" style="width:33px;padding-top:11px">${arrow(UP)}<div class="thumb" style="width:32px;height:238px;margin-top:9px"></div><div style="margin-top:354px">${arrow(DOWN)}</div></div>
              </div></div>
            </div>
          </div>
          <div class="lower">
            <div class="side">${closeBtn}${floatBtn}${pinBtn}<div class="vert">All Pins</div></div>
            <div class="pane">
              <div class="bar">
                <span class="lbl" style="width:85px">Named:</span>
                <div class="combo" style="width:80px">${this.named}<svg width="14" height="9" viewBox="0 0 14 9"><path d="M1 1L7 7.500L13 1" fill="none" stroke="#444" stroke-width="1.500"/></svg></div>
                <div class="bt" style="margin-left:1px"><svg width="18" height="18" viewBox="0 0 18 18"><path d="M5 0V9M0.500 4.500H9.500M2 1.500L8 7.500M8 1.500L2 7.500" stroke="#f5b400" stroke-width="1.300"/><path d="M6 7L2 11L6 15M9 8L6 11L9 14M10 8L13 11L10 14M13 7L17 11L13 15" fill="none" stroke="#45607a" stroke-width="1"/></svg></div>
                <span class="lbl" style="width:52px;padding-left:4px">Edit:</span>
                <div class="bt off"><svg width="12" height="12" viewBox="0 0 12 12"><path d="M1 1L11 11M11 1L1 11" stroke="#a0a0a0" stroke-width="1.800"/></svg></div>
                <div class="bt off" style="margin-left:2px"><svg width="16" height="13" viewBox="0 0 16 13"><path d="M1.500 7L5.500 11L14.500 1.500" fill="none" stroke="#ababab" stroke-width="3"/></svg></div>
                <div class="edit"></div>
                <span class="lbl" style="width:64px;padding-left:3px">Filter:</span>
                <div class="filter">Pins: all<svg width="8" height="5" viewBox="0 0 8 5"><path d="M0 0H8L4 4.500Z" fill="#111"/></svg></div>
              </div>
              <div class="grid">
                ${HEAD.map((h) => html`<div class="th"><div><span>${h}</span></div></div>`)}
                ${NODES.map((n) => this.cells(n))}
                ${this.cells(null)}
              </div>
            </div>
          </div>
        </div>
      </div>
      <div class="status"><span>0%</span><span>00:00:00</span></div>
      <div class="task">
        <div class="start"><svg width="32" height="32" viewBox="0 0 32 32"><path d="M0 4.500L13 2.700V15.200H0ZM14.500 2.500L32 0V15.200H14.500ZM0 16.800H13V29.300L0 27.500ZM14.500 16.800H32V32L14.500 29.500Z" fill="#fff"/></svg></div>
        <div class="find"><svg width="31" height="32" viewBox="0 0 31 32"><circle cx="20.500" cy="10.500" r="9.500" fill="none" stroke="#111" stroke-width="2"/><path d="M14 17.500L1 31" stroke="#111" stroke-width="2.200"/></svg>검색하려면 여기에 입력하십시오.</div>
        <div class="apps">${APPS.map(([k, g]) => html`<div class="app ${k}"><div class="ic"><svg width="44" height="44" viewBox="0 0 44 44">${g}</svg></div><i></i></div>`)}</div>
        <div class="tray">
          <svg width="26" height="14" viewBox="0 0 26 14"><path d="M1 13L13 1.500L25 13" fill="none" stroke="#fff" stroke-width="2"/></svg>
          <svg style="margin-left:18px" width="33" height="22" viewBox="0 0 33 22"><circle cx="16" cy="9" r="8.500" fill="#9fa5b0"/><path d="M7 21Q0 20 0 14.500Q1 9 7 9Q11 3 18 10L30 13Q33 14 33 17Q33 21 28 21Z" fill="#fff"/></svg>
          <svg style="margin-left:17px" width="31" height="20" viewBox="0 0 31 20"><rect x="1" y="1.500" width="26" height="17" fill="none" stroke="#fff" stroke-width="2"/><rect x="4.500" y="5" width="19" height="10" fill="#fff"/><path d="M29.500 6V14" stroke="#fff" stroke-width="2.500"/></svg>
          <svg style="margin-left:21px" width="25" height="25" viewBox="0 0 25 25"><g fill="none" stroke="#fff" stroke-width="1.800"><path d="M1 24Q2 3 24 1"/><path d="M7 24Q8 9 24 7.500"/><path d="M13 24Q14 15 24 14"/></g><circle cx="21.500" cy="22" r="2.800" fill="#fff"/></svg>
          <svg style="margin-left:18px" width="29" height="24" viewBox="0 0 29 24"><path d="M1 8H5L11 1.500V22.500L5 16H1Z" fill="none" stroke="#fff" stroke-width="1.700"/><path d="M17 7.500L27 17.500M27 7.500L17 17.500" stroke="#fff" stroke-width="1.700"/></svg>
          <svg style="margin-left:17px" width="32" height="32" viewBox="0 0 32 32"><circle cx="16" cy="16" r="15" fill="#8f939c"/><path d="M10 9.500L22 22.500M22 9.500L10 22.500" stroke="#1b2440" stroke-width="3.400"/></svg>
          <div class="clock"><span class="ko">오후</span> 7:08<br>2019-11-26</div>
          <svg style="margin-right:25px" width="48" height="48" viewBox="0 0 48 48"><path d="M0 1H32V27H18L13 33V27H0Z" fill="#fff"/><path d="M5 8H27M5 14H27M5 20H20" stroke="#1b2440" stroke-width="2"/><circle cx="30.500" cy="31.500" r="16" fill="#333a44" stroke="#9a9a9a" stroke-width="2"/><text x="30.500" y="39.500" class="g" font-size="21" fill="#fff">5</text></svg>
          <div class="peek"></div>
        </div>
      </div>
      <div class="mark"><div class="a">Windows <span class="ko">정품 인증</span></div><div class="b"><span class="ko">[설정]으로 이동하여 </span>Windows<span class="ko">를 정품 인증합니</span><br><span class="ko">다.</span></div></div>
    `;
  }
}
